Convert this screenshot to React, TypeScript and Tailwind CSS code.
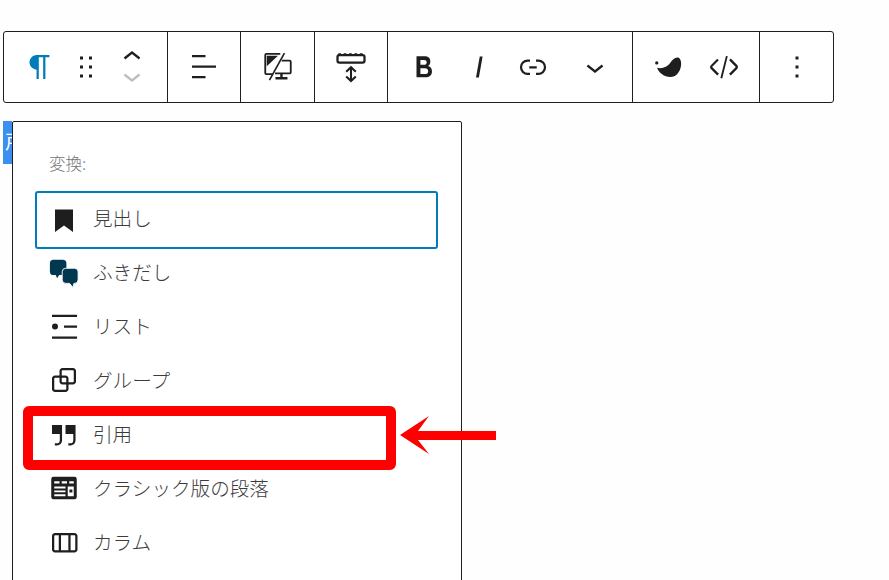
import React from 'react';

const Icon = ({ d, className = '' }: { d: string; className?: string }) => (
  <svg viewBox="0 0 24 24" className={`w-9 h-9 shrink-0 fill-current ${className}`}>
    <path d={d} />
  </svg>
);

const paths = {
  paragraph: 'M18.3 4H9.9v-.1l-.9.2c-2.3.4-4 2.4-4 4.8s1.7 4.4 4 4.8l.7.1V20h1.5V5.5h2.9V20h1.5V5.5h2.7V4z',
  drag: 'M8 7h2V5H8v2zm0 6h2v-2H8v2zm0 6h2v-2H8v2zm6-14v2h2V5h-2zm0 8h2v-2h-2v2zm0 6h2v-2h-2v2z',
  align: 'M13 5.5H4V4h9v1.5Zm7 7H4V11h16v1.5Zm-7 7H4V18h9v1.5Z',
  bold: 'M14.7 11.3c1-.6 1.5-1.6 1.5-3 0-2.3-1.3-3.4-4-3.4H7v14h5.8c1.4 0 2.5-.3 3.3-1 .8-.7 1.2-1.7 1.2-2.9.1-1.9-.8-3.1-2.6-3.7zm-5.1-4h2.3c.6 0 1.1.1 1.4.4.3.3.5.7.5 1.2s-.2 1-.5 1.2c-.3.3-.8.4-1.4.4H9.6V7.3zm4.6 9c-.4.3-1 .4-1.7.4H9.6v-3.9h2.9c.7 0 1.3.2 1.7.5.4.3.6.8.6 1.5s-.2 1.2-.6 1.5z',
  italic: 'M12.5 5L10 19h1.9l2.5-14z',
  link: 'M10 17.389H8.444A5.194 5.194 0 1 1 8.444 7H10v1.5H8.444a3.694 3.694 0 0 0 0 7.389H10v1.5ZM14 7h1.556a5.194 5.194 0 0 1 0 10.39H14v-1.5h1.556a3.694 3.694 0 0 0 0-7.39H14V7Zm-4.5 6h5v-1.5h-5V13Z',
  chevronDown: 'M17.5 11.6L12 16l-5.5-4.4.9-1.2L12 14l4.5-3.6 1 1.2z',
  chevronUp: 'M6.5 12.4L12 8l5.5 4.4-.9 1.2L12 10l-4.5 3.6-1-1.2z',
  code: 'M20.8 10.7l-4.3-4.3-1.1 1.1 4.3 4.3c.1.1.1.3 0 .4l-4.3 4.3 1.1 1.1 4.3-4.3c.7-.8.7-1.9 0-2.6zM4.2 11.8l4.3-4.3-1-1-4.3 4.3c-.7.7-.7 1.8 0 2.5l4.3 4.3 1.1-1.1-4.3-4.3c-.2-.1-.2-.3-.1-.4zM13.3 4.6l-3.7 14.8 1.2.3 3.7-14.8z',
  more: 'M13 19h-2v-2h2v2zm0-6h-2v-2h2v2zm0-6h-2V5h2v2z',
  bookmark: 'M6 5h12v15l-6-4.4L6 20z',
  list: 'M4 4.5h16.700V6H4zM4 19h16.700v1.500H4zM12 11.700h8.700v1.500H12zM6 10.400a2 2 0 1 0 0 4 2 2 0 0 0 0-4z',
  group: 'M18 4h-7c-1.1 0-2 .9-2 2v3H6c-1.1 0-2 .9-2 2v7c0 1.1.9 2 2 2h7c1.1 0 2-.9 2-2v-3h3c1.1 0 2-.9 2-2V6c0-1.1-.9-2-2-2zm-4.5 14c0 .3-.2.5-.5.5H6c-.3 0-.5-.2-.5-.5v-7c0-.3.2-.5.5-.5h3V13c0 1.1.9 2 2 2h2.5v3zm0-4.5H11c-.3 0-.5-.2-.5-.5v-2.5H13c.3 0 .5.2.5.5v2.5zm5-.5c0 .3-.2.5-.5.5h-3V11c0-1.1-.9-2-2-2h-2.5V6c0-.3.2-.5.5-.5h7c.3 0 .5.2.5.5v7z',
  quote: 'M13 6v6h5.2v4c0 .8-.2 1.4-.5 1.7-.6.6-1.6.6-2.5.5h-.3v1.5h.5c1 0 2.3-.1 3.3-1 .6-.6 1-1.6 1-2.7V6H13zm-9 6h5.2v4c0 .8-.2 1.4-.5 1.7-.6.6-1.6.6-2.5.5h-.3v1.5h.5c1 0 2.3-.1 3.3-1 .6-.6 1-1.6 1-2.7V6H4v6z',
  columns: 'M19 6H6c-1.1 0-2 .9-2 2v9c0 1.1.9 2 2 2h13c1.1 0 2-.9 2-2V8c0-1.1-.9-2-2-2zm-4.1 1.5v10H10v-10h4.9zM5.5 17V8c0-.3.2-.5.5-.5h2.5v10H6c-.3 0-.5-.2-.5-.5zm14 0c0 .3-.2.5-.5.5h-2.6v-10H19c.3 0 .5.2.5.5v9z',
};

const VisibilityIcon = () => (
  <svg viewBox="0 0 24 24" className="w-9 h-9 shrink-0 text-[#1e1e1e]" fill="none">
    <path d="M8.5 16.700H4.200a.7.7 0 0 1-.7-.7V4a.7.7 0 0 1 .7-.7h9.300" stroke="currentColor" strokeWidth="1.200" />
    <path d="M4.500 4.500h7.500L4.500 11.500z" fill="currentColor" />
    <path d="M14.500 7.700h5.200a.8.8 0 0 1 .8.8v7a.8.8 0 0 1-.8.8H10" stroke="currentColor" strokeWidth="1.200" />
    <path d="M14.300 16.500v3M10.300 19.500h8" stroke="currentColor" strokeWidth="1.600" />
    <path d="M16.300 2.700L6.300 20.700" stroke="currentColor" strokeWidth="1.100" />
  </svg>
);

const SpacerIcon = () => (
  <svg viewBox="0 0 24 24" className="w-9 h-9 shrink-0 text-[#1e1e1e]" fill="none">
    <rect x="3" y="4" width="18" height="5" rx="1.200" stroke="currentColor" strokeWidth="1.500" />
    <path d="M3.500 3.400h17" stroke="currentColor" strokeWidth="1.200" strokeDasharray="1.800 1.800" />
    <path d="M12 12.500v8M8.800 15.200 12 12.200l3.200 3M8.800 18.300 12 21.300l3.200-3" stroke="currentColor" strokeWidth="1.400" />
  </svg>
);

const BloomIcon = () => (
  <svg viewBox="0 0 24 24" className="w-9 h-9 shrink-0 text-[#1e1e1e] fill-current">
    <path d="M4.700 12.500C8 13.500 11.500 12 13.300 9.500 14.800 7.300 16.500 5.500 18.500 5.700 20.500 6 21 9 20.700 11 20 15.500 17.500 18.700 13.500 18.700 9.500 18.700 6 16 4.700 12.500Z" />
    <circle cx="4.500" cy="9.300" r="1.100" />
  </svg>
);

const BubblesIcon = () => (
  <svg viewBox="0 0 24 24" className="w-9 h-9 shrink-0 text-[#00394f] fill-current">
    <path d="M5 3.800h6.200a2.400 2.400 0 0 1 2.400 2.400v5.400a2.400 2.400 0 0 1-2.400 2.400H8.800L7.400 16.200l-.9-2.200H5a2.400 2.400 0 0 1-2.400-2.400V6.200A2.400 2.400 0 0 1 5 3.800z" />
    <path
      d="M13.200 9.500h5.800a2.400 2.400 0 0 1 2.400 2.400v5.300a2.400 2.400 0 0 1-2.400 2.400h-.4l-.6 2.700-2.300-2.700h-2.500a2.400 2.400 0 0 1-2.400-2.400v-5.300a2.400 2.400 0 0 1 2.400-2.400z"
      stroke="#ffffff"
      strokeWidth="0.600"
    />
  </svg>
);

const TableIcon = () => (
  <svg viewBox="0 0 24 24" className="w-9 h-9 shrink-0 text-[#1e1e1e] fill-current">
    <path
      fillRule="evenodd"
      d="M5 4.500h14A1.500 1.500 0 0 1 20.500 6v12a1.500 1.500 0 0 1-1.500 1.500H5A1.500 1.500 0 0 1 3.500 18V6A1.500 1.500 0 0 1 5 4.500zM5.500 7.500v1.500h3.500V7.500zm5 0v1.500h3.500V7.500zm5 0v1.500h3V7.500zM5.500 11v1.300H13V11zM14.500 11v6.500h4V11zM5.500 13.600v1.300H13v-1.300zM5.500 16.200v1.300H13v-1.300z"
    />
    <rect x="15.600" y="13" width="2" height="2" />
  </svg>
);

const rows: { label: string; icon: React.ReactNode }[] = [
  { label: 'ふきだし', icon: <BubblesIcon /> },
  { label: 'リスト', icon: <Icon d={paths.list} className="text-[#1e1e1e]" /> },
  { label: 'グループ', icon: <Icon d={paths.group} className="text-[#1e1e1e]" /> },
  { label: '引用', icon: <Icon d={paths.quote} className="text-[#1e1e1e]" /> },
  { label: 'クラシック版の段落', icon: <TableIcon /> },
  { label: 'カラム', icon: <Icon d={paths.columns} className="text-[#1e1e1e]" /> },
];

const App: React.FC = () => {
  return (
    <div className="relative w-[889px] h-[580px] overflow-hidden bg-[#fefefe] pt-[31px] pl-[3px] font-['Noto_Sans_CJK_JP',sans-serif] text-[#1e1e1e]">
      <div className="flex w-[831px] h-[72px] bg-white border border-[#1e1e1e] rounded-[3px]">
        <div className="flex items-center w-[164px] pl-[18px] gap-[10px] border-r border-[#1e1e1e]">
          <Icon d={paths.paragraph} className="text-[#007cba]" />
          <Icon d={paths.drag} />
          <div className="flex flex-col gap-[7px] mt-[-2px]">
            <svg viewBox="0 6 24 10" className="w-9 h-[15px] fill-current">
              <path d={paths.chevronUp} />
            </svg>
            <svg viewBox="0 8 24 10" className="w-9 h-[15px] fill-current text-[#bdbdbd]">
              <path d={paths.chevronDown} />
            </svg>
          </div>
        </div>
        <div className="flex items-center justify-center w-[73px] border-r border-[#1e1e1e]">
          <Icon d={paths.align} />
        </div>
        <div className="flex items-center justify-center w-[74px] border-r border-[#1e1e1e]">
          <VisibilityIcon />
        </div>
        <div className="flex items-center justify-center w-[73px] border-r border-[#1e1e1e]">
          <SpacerIcon />
        </div>
        <div className="flex items-center w-[245px] pl-[18px] border-r border-[#1e1e1e]">
          <Icon d={paths.bold} />
          <Icon d={paths.italic} className="ml-[19px]" />
          <Icon d={paths.link} className="ml-[18px]" />
          <Icon d={paths.chevronDown} className="ml-[26px]" />
        </div>
        <div className="flex items-center w-[127px] pl-[17px] gap-5 border-r border-[#1e1e1e]">
          <BloomIcon />
          <Icon d={paths.code} />
        </div>
        <div className="flex items-center justify-center flex-1">
          <Icon d={paths.more} />
        </div>
      </div>

      <div className="flex items-start mt-[18px]">
        <div className="w-[9px] h-[43px] bg-[#3b8ff0] text-white text-[19px] leading-[40px] overflow-hidden whitespace-nowrap pl-[2px]">
          <span className="block w-[7px]">戸</span>
        </div>
        <div className="w-[450px] h-[470px] bg-white border border-[#1e1e1e] rounded-t-[2px] pl-[22px] pr-[23px]">
          <p className="mt-[29px] ml-[14px] text-[16.5px] leading-[24px] text-[#757575] font-light">変換:</p>
          <div className="mt-[16px] -mb-1 flex items-center h-[58px] pl-[9px] border-2 border-[#007cba] rounded-[3px]">
            <Icon d={paths.bookmark} />
            <span className="ml-[11px] mb-1 text-[19.6px] text-[#3c3c3c] font-light">見出し</span>
          </div>
          {rows.map((row) => (
            <div key={row.label} className="flex items-center h-[54px] pl-[11px]">
              {row.icon}
              <span className="ml-[11px] text-[19.6px] text-[#3c3c3c] font-light">{row.label}</span>
            </div>
          ))}
        </div>
      </div>

      {/* highlight box and arrow drawn over the screenshot */}
      <div className="absolute left-[23px] top-[406px] w-[373px] h-[64px] border-[10px] border-[#ff0000] rounded-[6px]" />
      <svg viewBox="0 0 96 40" className="absolute left-[400px] top-[415px] w-[96px] h-[40px]">
        <path d="M0 20 L29 1 L18 16 L96 16 L96 25 L18 25 L29 39 Z" fill="#ff0000" />
      </svg>
    </div>
  );
};

export default App;
